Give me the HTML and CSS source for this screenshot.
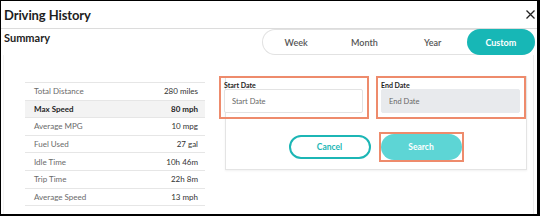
FILE: index.html
```html
<!DOCTYPE html>
<html>
<head>
<meta charset="utf-8">
<link rel="stylesheet" href="styles.css">
</head>
<body>
<div class="frame">
  <div class="header">
    <div class="title">Driving History</div>
    <svg class="close" width="9" height="9" viewBox="0 0 9 9"><path d="M0.5 0.5 L8.5 8.5 M8.5 0.5 L0.5 8.5" stroke="#222" stroke-width="1.3" fill="none"/></svg>
  </div>
  <div class="toprow">
    <div class="summary">Summary</div>
    <div class="segmented">
      <div class="seg">Week</div>
      <div class="seg">Month</div>
      <div class="seg">Year</div>
      <div class="seg active">Custom</div>
    </div>
  </div>
  <div class="content">
    <div class="stats">
      <div class="row"><span class="lbl">Total Distance</span><span class="val">280 miles</span></div>
      <div class="row hl"><span class="lbl">Max Speed</span><span class="val">80 mph</span></div>
      <div class="row"><span class="lbl">Average MPG</span><span class="val">10 mpg</span></div>
      <div class="row"><span class="lbl">Fuel Used</span><span class="val">27 gal</span></div>
      <div class="row"><span class="lbl">Idle Time</span><span class="val">10h 46m</span></div>
      <div class="row"><span class="lbl">Trip Time</span><span class="val">22h 8m</span></div>
      <div class="row"><span class="lbl">Average Speed</span><span class="val">13 mph</span></div>
    </div>
    <div class="filter">
      <div class="card">
        <div class="fields">
          <div class="field">
            <div class="flabel">Start Date</div>
            <div class="input">Start Date</div>
          </div>
          <div class="field">
            <div class="flabel">End Date</div>
            <div class="input disabled">End Date</div>
          </div>
        </div>
        <div class="buttons">
          <div class="btn cancel">Cancel</div>
          <div class="search-wrap"><div class="btn search">Search</div></div>
        </div>
      </div>
    </div>
  </div>
</div>
</body>
</html>
```

FILE: styles.css
```css
* { box-sizing: border-box; }
body { margin: 0; background: #fff; font-family: Lato, "Open Sans", sans-serif; }
.frame {
  width: 540px; height: 216px;
  border-style: solid; border-color: #000;
  border-width: 1px 3px 2px 1px;
  display: flex; flex-direction: column;
  background: #fff;
}
.header {
  height: 28px; flex: none;
  border-bottom: 1px solid #dcdcdc;
  display: flex; align-items: center; justify-content: space-between;
  padding: 0 2px 0 3px;
}
.title { font-size: 13px; font-weight: 700; color: #1e1e1e; letter-spacing: -0.1px; }
.close { display: block; margin-top: 0px; }
.toprow {
  display: flex; justify-content: space-between; align-items: flex-start;
  padding: 0 2px 0 3px; flex: none;
}
.summary { font-size: 11px; font-weight: 700; color: #1e1e1e; margin-top: 2px; }
.segmented {
  width: 273px; height: 26px;
  border-radius: 13px;
  box-shadow: inset 0 0 0 1px #e2e2e2;
  display: grid; grid-template-columns: repeat(4, 1fr);
}
.seg {
  display: flex; align-items: center; justify-content: center;
  font-size: 9px; color: #555; font-weight: 600;
}
.seg.active { background: #17b7b6; color: #fff; border-radius: 13px; font-weight: 700; }
.content {
  flex: 1;
  margin: 0 3px 0 2px;
  border-right: 1px solid #ececec;
  border-left: 1px solid #f4f4f4;
  padding: 21px 0 0 21px;
  display: flex; align-items: flex-start;
}
.stats { width: 180px; margin-top: 6px; border-top: 1px solid #e6e6e6; }
.row {
  height: 17.6px;
  border-bottom: 1px solid #e6e6e6;
  display: flex; align-items: center; justify-content: space-between;
  padding: 0 7px 0 9px;
  font-size: 8px; color: #6a6a6a;
}
.row .val { color: #333; }
.row.hl { background: #f3f3f3; }
.row.hl .lbl, .row.hl .val { color: #1e1e1e; font-weight: 700; }
.filter { width: 308px; margin-left: 14px; }
.card {
  margin-left: 6px;
  border: 1px solid #e4e4e4; border-top: none;
  box-shadow: 0 1px 2px rgba(0,0,0,0.06);
  padding-bottom: 7px;
}
.fields { display: flex; gap: 7px; margin-left: -7px; }
.field {
  flex: 1;
  border: 2px solid #ee8b6c;
  padding: 3px 4px 4px 3px;
}
.flabel { font-size: 7px; font-weight: 700; color: #1e1e1e; line-height: 8px; }
.input {
  height: 24px;
  border: 1px solid #e3e3e3; border-radius: 2px;
  background: #fff;
  display: flex; align-items: center;
  padding-left: 7px;
  font-size: 7.5px; color: #666;
}
.input.disabled { background: #e8eaed; border-color: #e8eaed; }
.buttons {
  display: flex; justify-content: center; align-items: center; gap: 8px;
  margin-top: 13px;
}
.btn {
  display: flex; align-items: center; justify-content: center;
  font-size: 8.5px; font-weight: 700; border-radius: 13px;
}
.cancel { width: 82px; height: 24px; border: 2px solid #1cb6b5; color: #1cb6b5; background: #fff; }
.search-wrap { border: 2px solid #ee8b6c; padding: 0; }
.search { width: 81px; height: 26px; background: #5dd5d5; color: #fff; }
```
